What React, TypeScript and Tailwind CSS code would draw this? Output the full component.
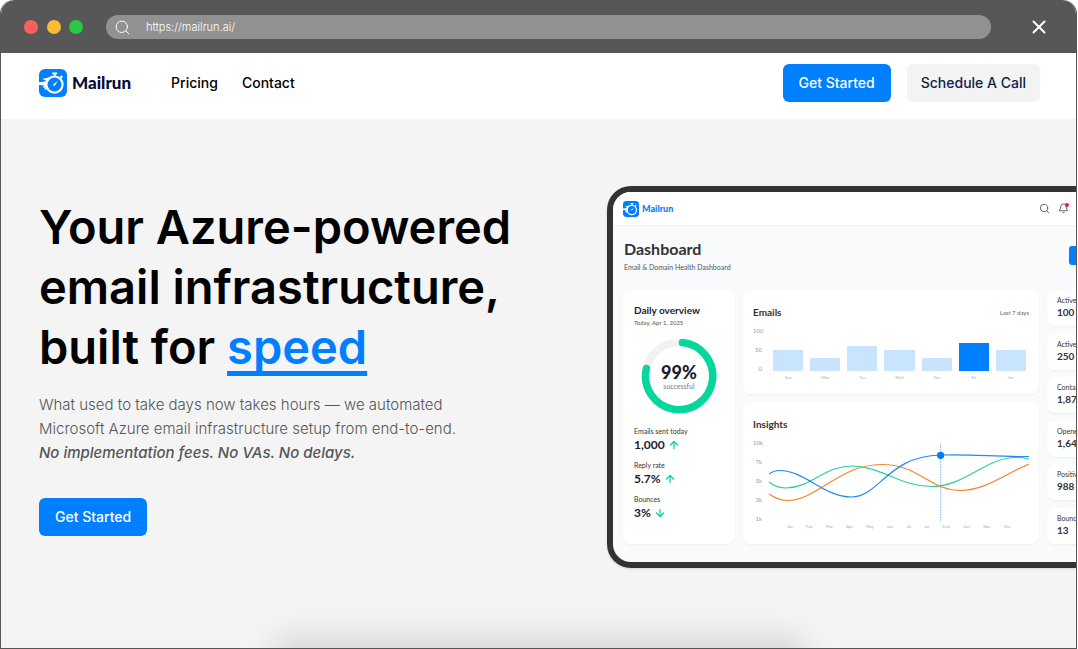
import { ArrowDown, ArrowUp, Bell, Search, X } from "lucide-react";

const emails = [
  { day: "Sun", height: 21 },
  { day: "Mon", height: 13 },
  { day: "Tue", height: 25 },
  { day: "Wed", height: 21 },
  { day: "Thu", height: 13 },
  { day: "Fri", height: 28, active: true },
  { day: "Sat", height: 21 },
];

const months = ["Jan", "Feb", "Mar", "Apr", "May", "Jun", "Jul", "Jul", "Sept", "Oct", "Nov", "Dec"];

const overview = [
  { label: "Emails sent today", value: "1,000", up: true },
  { label: "Reply rate", value: "5.7%", up: true },
  { label: "Bounces", value: "3%", up: false },
];

const stats = [
  { label: "Active domains", value: "100" },
  { label: "Active inboxes", value: "250" },
  { label: "Contacts", value: "1,874" },
  { label: "Opened", value: "1,643" },
  { label: "Positive replies", value: "988" },
  { label: "Bounced", value: "13" },
];

function Logo({ className }: { className: string }) {
  return (
    <svg className={className} viewBox="0 0 28 28" fill="none" aria-hidden="true">
      <rect width="28" height="28" rx="6" fill="#0080ff" />
      <path
        d="M13.2 3.6h5v1.6h-1.4v1.6h-2.2V5.2h-1.4zM20.9 7.6l1.3-1.3 1.8 1.8-1.3 1.3z"
        fill="#fff"
      />
      <path
        d="M11 7.4C9 8.8 6.6 9.4 3.4 9.4c.9 1.1 2.2 1.6 3.6 1.7-.6 1-1.6 1.5-2.8 1.7L0 13.2v2.6c1.8.5 3.6.7 5.3.5-.2.9-.9 1.4-2 1.7 1.1.6 2.3.8 3.4.6-.3.7-1 1.2-2 1.6 1.2.5 2.5.5 3.6.2l3.7 1.6z"
        fill="#fff"
      />
      <circle cx="15.5" cy="15.6" r="9.2" fill="#fff" />
      <circle cx="15.5" cy="15.6" r="7" fill="#0080ff" />
      <path d="M14.6 15l4.2-2.8-2.9 4.2a1 1 0 0 1-1.4-.1 1 1 0 0 1 .1-1.3z" fill="#fff" />
    </svg>
  );
}

function BrowserBar() {
  return (
    <div className="flex h-[53px] items-center rounded-t-[14px] bg-[#575757] pt-px pr-[26px] pl-[23px]">
      <div className="flex gap-2">
        <span className="size-[14px] rounded-full bg-[#ff5f5c]" />
        <span className="ml-px size-[14px] rounded-full bg-[#fdbc33]" />
        <span className="size-[14px] rounded-full bg-[#29ca43]" />
      </div>
      <label className="ml-[23px] flex h-6 flex-1 items-center rounded-full bg-[#919191] pl-2 text-white">
        <Search size={17} strokeWidth={1.4} aria-hidden="true" />
        <input
          className="ml-[15px] min-w-0 flex-1 bg-transparent text-[11px] font-light text-white outline-none"
          type="text"
          aria-label="Address"
          defaultValue="https://mailrun.ai/"
        />
      </label>
      <button type="button" aria-label="Close" className="ml-[37px] text-white">
        <X size={22} strokeWidth={2.2} />
      </button>
    </div>
  );
}

function NavBar() {
  return (
    <header className="flex h-[66px] items-center bg-white pr-9 pb-[6px] pl-[38px] text-sm font-medium">
      <a href="#" className="flex items-center gap-[5px]">
        <Logo className="size-7" />
        <span className="font-['Lato',sans-serif] text-[17px] font-black text-[#0a0838]">Mailrun</span>
      </a>
      <nav className="ml-10 flex gap-6 text-black">
        <a href="#pricing">Pricing</a>
        <a href="#contact">Contact</a>
      </nav>
      <div className="ml-auto flex gap-4">
        <button type="button" className="h-[38px] rounded-md bg-[#0080ff] px-4 text-white">
          Get Started
        </button>
        <button type="button" className="h-[38px] rounded-md bg-[#f3f3f3] px-[14px] text-[#0f1f4b]">
          Schedule A Call
        </button>
      </div>
    </header>
  );
}

function DailyOverview() {
  return (
    <div className="w-28 shrink-0 rounded-lg bg-white px-[11px] pt-[14px] shadow-xs">
      <h3 className="text-[10px] leading-3 font-bold whitespace-nowrap text-[#1b1c31]">Daily overview</h3>
      <p className="mt-[2px] text-[6px] leading-[10px] text-[#555]">Today, Apr 1, 2025</p>
      <div className="relative mt-[10px] ml-[7px] size-[76px]">
        <svg className="size-full" viewBox="0 0 76 76" fill="none" strokeWidth="7.5">
          <circle cx="38" cy="38" r="33.6" stroke="#f2f2f2" />
          <path
            d="M41.5 4.6A33.6 33.6 0 1 1 5.4 30.5"
            stroke="#05d69c"
            strokeLinecap="round"
          />
        </svg>
        <div className="absolute inset-0 flex flex-col items-center justify-center text-center">
          <span className="text-lg leading-5 font-black text-[#1b1c31]">99%</span>
          <span className="text-[7px] leading-2 text-[#777]">successful</span>
        </div>
      </div>
      <dl className="mt-3 flex flex-col gap-2">
        {overview.map((item) => (
          <div key={item.label}>
            <dt className="text-[7px] leading-[10px] whitespace-nowrap text-[#333]">{item.label}</dt>
            <dd className="flex items-center gap-[3px] pt-px text-xs leading-[15px] font-bold text-[#1b1c31]">
              {item.value}
              {item.up ? (
                <ArrowUp size={12} strokeWidth={2.5} color="#05d69c" />
              ) : (
                <ArrowDown size={12} strokeWidth={2.5} color="#05d69c" />
              )}
            </dd>
          </div>
        ))}
      </dl>
    </div>
  );
}

function EmailsCard() {
  return (
    <div className="h-[104px] rounded-lg bg-white px-[10px] pt-4 shadow-xs">
      <div className="flex items-center justify-between">
        <h3 className="text-[10px] leading-3 font-bold text-[#333]">Emails</h3>
        <span className="text-[6px] text-[#666]">Last 7 days</span>
      </div>
      <div className="mt-[9px] flex">
        <div className="flex w-[9px] flex-col gap-3 text-right text-[6px] leading-[7px] text-[#999]">
          <span>100</span>
          <span>50</span>
          <span>0</span>
        </div>
        <div className="ml-[11px] flex flex-1 items-end gap-[7px] pr-[3px]">
          {emails.map((bar) => (
            <div key={bar.day} className="flex-1 text-center">
              <div
                className={bar.active ? "bg-[#0080ff]" : "bg-[#c9e4ff]"}
                style={{ height: bar.height }}
              />
              <span className="mt-1 -mb-2 block text-[4px] leading-[5px] text-[#aaa]">{bar.day}</span>
            </div>
          ))}
        </div>
      </div>
    </div>
  );
}

function InsightsCard() {
  return (
    <div className="h-[142px] rounded-lg bg-white px-[10px] pt-4 shadow-xs">
      <h3 className="text-[10px] leading-3 font-bold text-[#333]">Insights</h3>
      <div className="mt-[9px] flex">
        <div className="flex w-[9px] flex-col gap-3 text-right text-[6px] leading-[7px] text-[#999]">
          <span>10k</span>
          <span>7k</span>
          <span>5k</span>
          <span>3k</span>
          <span>1k</span>
        </div>
        <div className="ml-[7px] flex-1">
          <svg className="mt-[5px] h-[78px] w-full" viewBox="0 0 259 78" fill="none" preserveAspectRatio="none">
            <path d="M171 0V78" stroke="#5ba8fb" strokeWidth=".8" strokeDasharray="1.5 1" />
            <path
              d="M0 38C5 42 10 44 17 44C42 44 55 22 82 22C112 22 130 42.5 162 42.5C195 42.5 215 14 246 13.5C251 13.5 255 14 259 15"
              stroke="#2fce9f"
              strokeWidth="1.2"
            />
            <path
              d="M0 50C6 54 11 56.5 18 56.5C48 56.5 70 20.5 112 20.5C150 20.5 160 46.5 191 46.5C215 46.5 235 30 259 20"
              stroke="#f0882f"
              strokeWidth="1.2"
            />
            <path
              d="M0 30C4 27 8 26.5 11 26.5C35 26.5 55 53 82 53C110 53 118 12 171 11C205 10 225 13 259 12.5"
              stroke="#2389f0"
              strokeWidth="1.2"
            />
            <circle cx="171" cy="11.3" r="3.6" fill="#0080ff" />
          </svg>
          <div className="flex justify-between pr-[18px] pl-[18px] text-[4px] leading-[9px] text-[#aaa]">
            {months.map((month, index) => (
              <span key={index}>{month}</span>
            ))}
          </div>
        </div>
      </div>
    </div>
  );
}

// The right edge of the dashboard runs off the page
function Dashboard() {
  return (
    <div className="overflow-hidden rounded-l-3xl border-[6px] border-r-0 border-[#333] bg-[#f9fafc] font-['Lato',sans-serif] shadow-sm">
      <div className="flex h-[33px] items-center bg-white pr-[7px] pl-[10px] shadow-xs">
        <Logo className="size-4" />
        <span className="ml-[3px] text-[9px] font-black text-[#0080ff]">Mailrun</span>
        <div className="ml-auto flex items-center gap-2 text-[#555]">
          <Search size={11} strokeWidth={2} />
          <div className="relative">
            <Bell size={11} strokeWidth={2} />
            <span className="absolute top-0 right-0 size-1 rounded-full bg-[#e8177a]" />
          </div>
        </div>
      </div>
      <div className="flex items-start justify-between pt-[15px] pl-[11px]">
        <div>
          <h2 className="text-base leading-[18px] font-bold text-[#333]">Dashboard</h2>
          <p className="mt-1 text-[7px] leading-[10px] text-[#555]">Email &amp; Domain Health Dashboard</p>
        </div>
        <span className="mt-[6px] h-[19px] w-[7px] rounded-l-[3px] bg-[#0080ff]" />
      </div>
      <div className="mt-[18px] flex gap-2 pb-[18px] pl-[10px]">
        <DailyOverview />
        <div className="flex w-[296px] shrink-0 flex-col gap-2">
          <EmailsCard />
          <InsightsCard />
        </div>
        <div className="flex w-28 shrink-0 flex-col justify-between">
          {stats.map((stat) => (
            <div key={stat.value} className="h-9 rounded-lg bg-white pt-[5px] pl-[10px] shadow-xs">
              <p className="text-[7px] leading-[10px] text-[#333]">{stat.label}</p>
              <p className="text-[10px] leading-[14px] font-bold text-[#333]">{stat.value}</p>
            </div>
          ))}
        </div>
      </div>
    </div>
  );
}

function Hero() {
  return (
    <main className="relative flex flex-1 items-start overflow-hidden bg-[#f4f4f4] pl-[38px]">
      <div className="min-w-0 flex-1 pt-[78px]">
        <h1 className="text-[47px] leading-[60px] font-semibold whitespace-nowrap text-black">
          Your Azure-powered
          <br />
          email infrastructure,
          <br />
          built for{" "}
          <span className="text-[#0080ff] underline decoration-[5px] underline-offset-[7px] [text-decoration-skip-ink:none]">
            speed
          </span>
        </h1>
        <p className="mt-4 text-[15px] leading-6 font-light whitespace-nowrap text-[#555]">
          What used to take days now takes hours — we automated
          <br />
          Microsoft Azure email infrastructure setup from end-to-end.
          <br />
          <em className="font-medium">No implementation fees. No VAs. No delays.</em>
        </p>
        <button
          type="button"
          className="mt-[33px] h-[38px] rounded-md bg-[#0080ff] px-4 text-sm font-medium text-white"
        >
          Get Started
        </button>
      </div>
      <div className="w-[469px] shrink-0 pt-[67px]">
        <Dashboard />
      </div>
      <div className="absolute inset-x-[26%] top-full h-12 shadow-[0_0_36px_6px_rgba(0,0,0,0.16)]" />
    </main>
  );
}

export default function App() {
  return (
    <div className="min-h-screen bg-white pr-px font-['Inter','Liberation_Sans',sans-serif]">
      <div className="flex min-h-screen flex-col overflow-hidden rounded-t-[14px] border border-t-0 border-[#575757]">
        <BrowserBar />
        <NavBar />
        <Hero />
      </div>
    </div>
  );
}
